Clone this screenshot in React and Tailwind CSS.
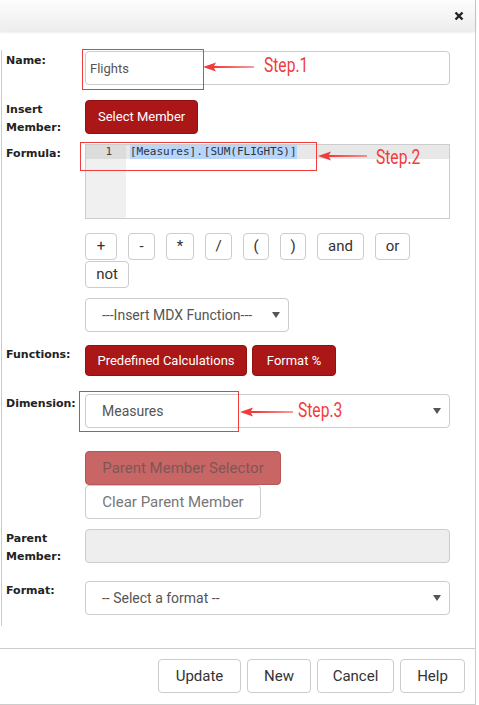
// @ts-nocheck
import { useState } from 'react';

const labelCls =
  "h-0 w-[79px] shrink-0 overflow-visible pt-[1px] text-[11px] leading-[18px] font-bold text-[#222] font-['DejaVu_Sans',sans-serif]";
const inputCls =
  'h-[34px] w-[365px] rounded-[4px] border border-[#ccc] bg-white px-[4px] text-[13px] text-[#555] outline-none';
const redBtn =
  'whitespace-nowrap rounded-[4px] border border-[#8f1212] bg-[#ab1717] text-[13px] text-white';
const opBtn =
  'h-[27px] rounded-[4px] border border-[#ccc] bg-white text-[15px] leading-none text-[#333]';
const footBtn =
  'h-[34px] rounded-[4px] border border-[#ccc] bg-white text-[15px] text-[#333]';

const Caret = () => (
  <svg width="8" height="6" viewBox="0 0 8 6" className="absolute right-[8px] top-1/2 -translate-y-1/2">
    <path d="M0 0 H8 L4 6 Z" fill="#555" />
  </svg>
);

const FakeSelect = ({ value, className }) => (
  <div className={`relative flex h-[34px] items-center rounded-[4px] border border-[#ccc] bg-white pl-[16px] text-[14px] text-[#555] ${className}`}>
    {value}
    <Caret />
  </div>
);

const Arrow = ({ width, className }) => (
  <svg width={width} height="10" viewBox={`0 0 ${width} 10`} className={`absolute ${className}`}>
    <path d={`M0 5 L13 0.5 L11 4 L${width} 4.6 L${width} 5.4 L11 6 L13 9.5 Z`} fill="#f03c3c" />
  </svg>
);

const StepLabel = ({ children, className }) => (
  <span className={`absolute origin-left scale-x-[0.78] text-[20px] leading-none text-[#f43b3b] ${className}`}>
    {children}
  </span>
);

const Row = ({ label, className = '', children }) => (
  <div className={`flex ${className}`}>
    <div className={labelCls}>{label}</div>
    <div>{children}</div>
  </div>
);

export default function App() {
  const [name, setName] = useState('Flights');
  const ops = [
    ['+', 'w-[32px]'],
    ['-', 'w-[27px]'],
    ['*', 'w-[28px]'],
    ['/', 'w-[27px]'],
    ['(', 'w-[26px]'],
    [')', 'w-[26px]'],
    ['and', 'w-[47px]'],
    ['or', 'w-[35px]'],
  ];

  return (
    <div className="relative h-[705px] w-[479px] overflow-hidden bg-white font-['Roboto',sans-serif]">
      <div className="flex h-[705px] w-[476px] flex-col border-r border-b border-[#ccc]">
        {/* header */}
        <div className="relative z-10 flex h-[31px] items-center justify-end bg-gradient-to-b from-[#fdfdfd] to-[#ededed] pr-[11px] shadow-[0_1px_3px_rgba(0,0,0,0.12)]">
          <svg width="10" height="10" viewBox="0 0 10 10">
            <path d="M1.5 1.5 L8.5 8.5 M8.5 1.5 L1.5 8.5" stroke="#222" strokeWidth="2.4" />
          </svg>
        </div>

        {/* form */}
        <div className="mt-[19px] ml-[1px] border-l border-[#ccc] pb-[11px] pl-[4px]">
          <Row label="Name:" className="mt-[1px]">
            <input className={inputCls} value={name} onChange={(e) => setName(e.target.value)} />
          </Row>

          <Row label={<>Insert<br />Member:</>} className="mt-[15px]">
            <button className={`${redBtn} h-[34px] px-[12px]`}>Select Member</button>
          </Row>

          <Row label="Formula:" className="mt-[10px]">
            <div className="flex h-[75px] w-[365px] border border-[#ccc] bg-white">
              <div className="w-[40px] bg-[#f0f0f0]">
                <div className="h-[14px] bg-[#dcdcdc] pr-[14px] text-right font-['DejaVu_Sans_Mono',monospace] text-[11px] leading-[14px] text-[#444]">
                  1
                </div>
              </div>
              <div className="flex-1">
                <div className="flex h-[14px] items-center bg-[#e8e8e8] pl-[4px] font-['DejaVu_Sans_Mono',monospace] text-[11px] leading-[14px] text-[#2c3440]">
                  <span className="bg-[#b8d6fb] pr-[1px]">[Measures].</span>
                  <span className="bg-[#b8d6fb]">[SUM(FLIGHTS)]</span>
                </div>
              </div>
            </div>
          </Row>

          <Row label="" className="mt-[14px]">
            <div className="flex w-[365px] flex-wrap gap-x-[11px] gap-y-[1px]">
              {ops.map(([op, w]) => (
                <button key={op} className={`${opBtn} ${w}`}>{op}</button>
              ))}
              <button className={`${opBtn} w-[44px]`}>not</button>
            </div>
          </Row>

          <Row label="" className="mt-[10px]">
            <FakeSelect value="---Insert MDX Function---" className="w-[204px]" />
          </Row>

          <Row label="Functions:" className="mt-[13px]">
            <div className="flex gap-[5px]">
              <button className={`${redBtn} h-[31px] w-[162px]`}>Predefined Calculations</button>
              <button className={`${redBtn} h-[31px] w-[84px]`}>Format %</button>
            </div>
          </Row>

          <Row label="Dimension:" className="mt-[18px]">
            <FakeSelect value="Measures" className="w-[365px] text-[13px]" />
          </Row>

          <Row label="" className="mt-[23px]">
            <div className="flex flex-col items-start">
              <button className="h-[34px] w-[196px] rounded-[4px] border border-[#b85555] bg-[#c86666] text-[15px] text-[#7e5656]">
                Parent Member Selector
              </button>
              <button className="h-[34px] w-[176px] rounded-[4px] border border-[#ccc] bg-white text-[15px] text-[#777]">
                Clear Parent Member
              </button>
            </div>
          </Row>

          <Row label={<>Parent<br />Member:</>} className="mt-[10px]">
            <div className="h-[34px] w-[365px] rounded-[4px] border border-[#ccc] bg-[#eee]" />
          </Row>

          <Row label="Format:" className="mt-[18px]">
            <FakeSelect value="-- Select a format --" className="w-[365px]" />
          </Row>
        </div>

        {/* footer */}
        <div className="mt-[22px] flex justify-end gap-[6px] border-t border-[#ccc] pt-[10px] pr-[10px]">
          <button className={`${footBtn} w-[83px]`}>Update</button>
          <button className={`${footBtn} w-[64px]`}>New</button>
          <button className={`${footBtn} w-[77px]`}>Cancel</button>
          <button className={`${footBtn} w-[65px]`}>Help</button>
        </div>
      </div>

      {/* step annotations */}
      <div className="absolute left-[82px] top-[49px] h-[41px] w-[122px] border border-[#f03c3c]" />
      <Arrow width={51} className="left-[203px] top-[62px]" />
      <StepLabel className="left-[264px] top-[55px]">Step.1</StepLabel>

      <div className="absolute left-[80px] top-[142px] h-[29px] w-[237px] border border-[#f03c3c]" />
      <Arrow width={49} className="left-[318px] top-[151px]" />
      <StepLabel className="left-[376px] top-[147px]">Step.2</StepLabel>

      <div className="absolute left-[79px] top-[391px] h-[41px] w-[160px] border border-[#f03c3c]" />
      <Arrow width={53} className="left-[240px] top-[407px]" />
      <StepLabel className="left-[298px] top-[400px]">Step.3</StepLabel>
    </div>
  );
}
